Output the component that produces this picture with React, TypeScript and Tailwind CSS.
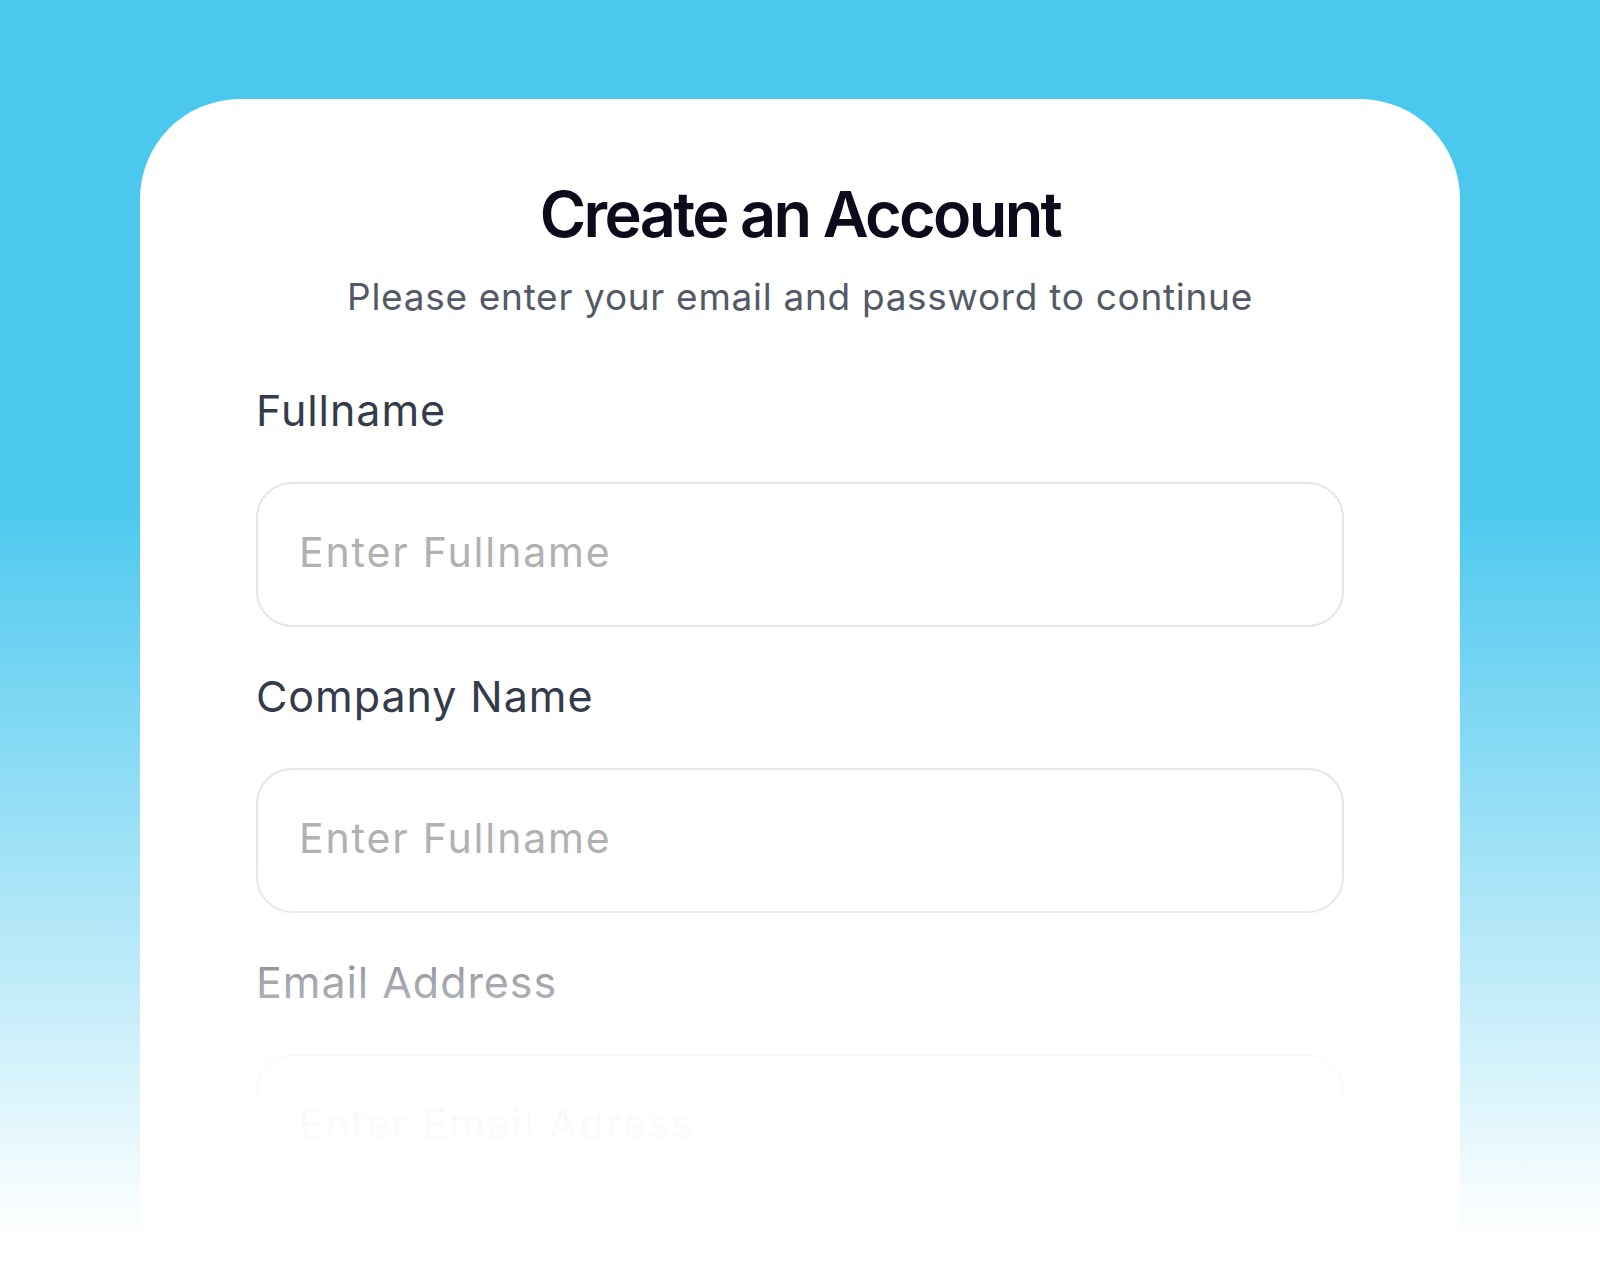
import { useState } from "react";

interface FieldProps {
  label: string;
  placeholder: string;
  value: string;
  onChange: (v: string) => void;
  type?: string;
}

function Field({ label, placeholder, value, onChange, type }: FieldProps) {
  return (
    <div className="flex flex-col">
      <label className="text-[43px] leading-none text-[#343b4a] tracking-[0.022em]">{label}</label>
      <input
        type={type ?? "text"}
        value={value}
        onChange={(e) => onChange(e.target.value)}
        placeholder={placeholder}
        className="mt-[50px] h-[145px] w-full rounded-[36px] border-2 border-[#e6e6e6] bg-white pl-[41px] pr-[44px] pb-[6px] text-[41px] tracking-[0.045em] text-[#343b4a] placeholder-[#b1b1b1] focus:outline-none"
      />
    </div>
  );
}

export default function App() {
  const [fullname, setFullname] = useState("");
  const [company, setCompany] = useState("");
  const [email, setEmail] = useState("");

  return (
    <div className="h-[1263px] w-full overflow-hidden bg-[linear-gradient(to_bottom,#4cc8ef_0%,#4cc8ef_40%,#ffffff_98%)] pt-[99px] font-['Inter','Noto_Sans',sans-serif]">
      <div className="relative mx-[140px] h-[1164px] overflow-hidden rounded-t-[100px] bg-white px-[116px] pt-[84px]">
        {/* Header */}
        <h1 className="text-center text-[63px] leading-none font-semibold tracking-[-0.042em] text-[#0b0b1c]">
          Create an Account
        </h1>
        <p className="mt-[32px] text-center text-[37px] leading-none tracking-[0.019em] text-[#535a66]">
          Please enter your email and password to continue
        </p>

        {/* Form */}
        <div className="mt-[74px] flex flex-col gap-[48px]">
          <Field label="Fullname" placeholder="Enter Fullname" value={fullname} onChange={setFullname} />
          <Field label="Company Name" placeholder="Enter Fullname" value={company} onChange={setCompany} />
          <Field label="Email Address" placeholder="Enter Email Adress" value={email} onChange={setEmail} type="email" />
        </div>

        {/* Fade out */}
        <div className="pointer-events-none absolute inset-x-0 bottom-0 h-[400px] bg-[linear-gradient(to_bottom,rgba(255,255,255,0)_0%,rgba(255,255,255,0.55)_30%,rgba(255,255,255,0.93)_62%,#ffffff_80%)]" />
      </div>
    </div>
  );
}
